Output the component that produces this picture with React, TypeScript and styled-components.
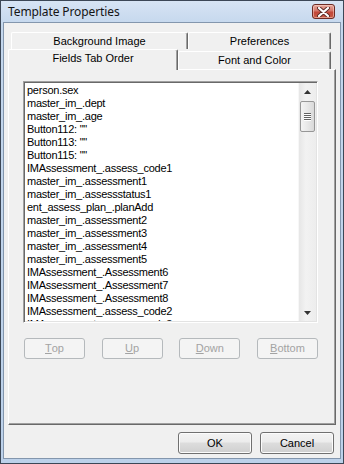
import React from "react"
import styled, { createGlobalStyle } from "styled-components"

const GlobalStyle = createGlobalStyle`
  html, body {
    margin: 0;
    padding: 0;
  }
  body {
    background: #fff;
    font-family: "Liberation Sans", Arial, sans-serif;
  }
`

const Window = styled.div`
  width: 344px;
  height: 464px;
  box-sizing: border-box;
  border: 1px solid #3c4756;
  background: linear-gradient(#d7e4f4, #c4d7ed 24px, #bcd1ea);
  padding: 0 2px 4px 2px;
  display: flex;
  flex-direction: column;
`

const TitleBar = styled.div`
  height: 21px;
  display: flex;
  align-items: center;
  justify-content: space-between;
  padding: 0 6px 0 5px;
`

const Title = styled.span`
  font-family: "Noto Sans", "Open Sans", sans-serif;
  font-size: 12px;
  color: #141414;
  letter-spacing: -0.1px;
`

const CloseBtn = styled.div`
  width: 23px;
  height: 15px;
  box-sizing: border-box;
  border: 1px solid #6d2b24;
  border-radius: 3px;
  background: linear-gradient(#e6a89c, #d4766a 45%, #c2473a 55%, #c75a44);
  display: flex;
  align-items: center;
  justify-content: center;
  box-shadow: inset 0 0 0 1px rgba(255, 220, 210, 0.5);
`

const Client = styled.div`
  flex: 1;
  background: #f0f0f0;
  border: 1px solid #8396ad;
  display: flex;
  flex-direction: column;
  padding: 9px 4px 4px 4px;
`

const TabRow = styled.div<{ $indent: number }>`
  display: flex;
  align-items: flex-end;
  padding-left: ${(p) => p.$indent}px;
`

const Tab = styled.div<{ $w: number; $h: number; $selected?: boolean }>`
  width: ${(p) => p.$w}px;
  height: ${(p) => p.$h}px;
  box-sizing: border-box;
  background: #f0f0f0;
  border-top: 1px solid #fff;
  border-left: 1px solid #fff;
  border-right: 1px solid #696969;
  box-shadow: inset -1px 0 0 #a0a0a0;
  border-radius: 2px 2px 0 0;
  display: flex;
  justify-content: center;
  padding-top: 2px;
  font-size: 11px;
  line-height: 13px;
  color: #000;
  position: relative;
  z-index: ${(p) => (p.$selected ? 2 : 1)};
  margin-bottom: ${(p) => (p.$selected ? -1 : 0)}px;
`

const Panel = styled.div`
  flex: 1;
  box-sizing: border-box;
  border-top: 1px solid #fff;
  border-left: 1px solid #fff;
  border-right: 1px solid #696969;
  border-bottom: 1px solid #696969;
  box-shadow: inset -1px -1px 0 #a0a0a0;
  display: flex;
  flex-direction: column;
  padding: 11px 17px 0 14px;
`

const ListBox = styled.div`
  height: 242px;
  box-sizing: border-box;
  background: #fff;
  border-top: 1px solid #a0a0a0;
  border-left: 1px solid #a0a0a0;
  border-right: 1px solid #fff;
  border-bottom: 1px solid #fff;
  box-shadow: inset 1px 1px 0 #696969, inset -1px -1px 0 #e3e3e3;
  display: flex;
  padding: 1px;
`

const Items = styled.div`
  flex: 1;
  overflow: hidden;
  padding: 1px 0 0 2px;
`

const Item = styled.div`
  font-size: 11px;
  line-height: 13px;
  height: 13px;
  white-space: nowrap;
  color: #000;
  letter-spacing: -0.25px;
`

const ScrollBar = styled.div`
  width: 17px;
  display: flex;
  flex-direction: column;
  background: linear-gradient(90deg, #e6e6e6, #f2f2f2 40%, #ededed);
  border-left: 1px solid #f7f7f7;
`

const Arrow = styled.div`
  height: 17px;
  display: flex;
  align-items: center;
  justify-content: center;
`

const Track = styled.div`
  flex: 1;
  padding-top: 1px;
`

const Thumb = styled.div`
  height: 31px;
  margin: 0 1px;
  box-sizing: border-box;
  border: 1px solid #979797;
  border-radius: 2px;
  background: linear-gradient(90deg, #f4f4f4, #e8e8e8 50%, #d9d9d9);
  display: flex;
  flex-direction: column;
  align-items: center;
  justify-content: center;
  gap: 1px;
`

const Grip = styled.div`
  width: 7px;
  height: 1px;
  background: #636363;
  box-shadow: 0 1px 0 #ffffff;
`

const MoveRow = styled.div`
  display: flex;
  justify-content: space-between;
  margin-top: 15px;
  padding-left: 1px;
`

const SmallBtn = styled.div`
  width: 61px;
  height: 21px;
  box-sizing: border-box;
  border: 1px solid #b5b9bc;
  border-radius: 3px;
  background: #f4f4f4;
  color: #a3a3a3;
  font-size: 11px;
  display: flex;
  align-items: center;
  justify-content: center;
  padding-bottom: 1px;
  u {
    text-decoration: underline;
    text-underline-offset: 1px;
  }
`

const Footer = styled.div`
  display: flex;
  justify-content: flex-end;
  gap: 8px;
  margin-top: 7px;
  padding-right: 2px;
`

const DialogBtn = styled.div`
  width: 74px;
  height: 22px;
  box-sizing: border-box;
  border: 1px solid #707070;
  border-radius: 3px;
  background: linear-gradient(#f3f3f3, #ececec 45%, #dddddd 50%, #cfcfcf);
  box-shadow: inset 0 0 0 1px #fcfcfc;
  color: #000;
  font-size: 11px;
  display: flex;
  align-items: center;
  justify-content: center;
`

const fields = [
  "person.sex",
  "master_im_.dept",
  "master_im_.age",
  'Button112: ""',
  'Button113: ""',
  'Button115: ""',
  "IMAssessment_.assess_code1",
  "master_im_.assessment1",
  "master_im_.assessstatus1",
  "ent_assess_plan_.planAdd",
  "master_im_.assessment2",
  "master_im_.assessment3",
  "master_im_.assessment4",
  "master_im_.assessment5",
  "IMAssessment_.Assessment6",
  "IMAssessment_.Assessment7",
  "IMAssessment_.Assessment8",
  "IMAssessment_.assess_code2",
  "IMAssessment_.assess_code3",
]

function App() {
  return (
    <>
      <GlobalStyle />
      <Window>
        <TitleBar>
          <Title>Template Properties</Title>
          <CloseBtn>
            <svg width="13" height="10" viewBox="0 0 13 10">
              <path
                d="M2 1 L11 9 M11 1 L2 9"
                stroke="#5a2a26"
                strokeWidth="4"
                strokeLinecap="round"
              />
              <path
                d="M2 1 L11 9 M11 1 L2 9"
                stroke="#fff"
                strokeWidth="2.2"
                strokeLinecap="round"
              />
            </svg>
          </CloseBtn>
        </TitleBar>
        <Client>
          <TabRow $indent={3}>
            <Tab $w={177} $h={17}>Background Image</Tab>
            <Tab $w={143} $h={17}>Preferences</Tab>
          </TabRow>
          <TabRow $indent={0}>
            <Tab $w={170} $h={21} $selected>
              Fields Tab Order
            </Tab>
            <Tab $w={153} $h={18}>Font and Color</Tab>
          </TabRow>
          <Panel>
            <ListBox>
              <Items>
                {fields.map((f) => (
                  <Item key={f}>{f}</Item>
                ))}
              </Items>
              <ScrollBar>
                <Arrow>
                  <svg width="7" height="4" viewBox="0 0 7 4">
                    <path d="M0 4 L3.5 0 L7 4 Z" fill="#333" />
                  </svg>
                </Arrow>
                <Track>
                  <Thumb>
                    <Grip />
                    <Grip />
                    <Grip />
                    <Grip />
                  </Thumb>
                </Track>
                <Arrow>
                  <svg width="7" height="4" viewBox="0 0 7 4">
                    <path d="M0 0 L7 0 L3.5 4 Z" fill="#333" />
                  </svg>
                </Arrow>
              </ScrollBar>
            </ListBox>
            <MoveRow>
              <SmallBtn>
                <u>T</u>op
              </SmallBtn>
              <SmallBtn>
                <u>U</u>p
              </SmallBtn>
              <SmallBtn>
                <u>D</u>own
              </SmallBtn>
              <SmallBtn>
                <u>B</u>ottom
              </SmallBtn>
            </MoveRow>
          </Panel>
          <Footer>
            <DialogBtn>OK</DialogBtn>
            <DialogBtn>Cancel</DialogBtn>
          </Footer>
        </Client>
      </Window>
    </>
  )
}

export default App
